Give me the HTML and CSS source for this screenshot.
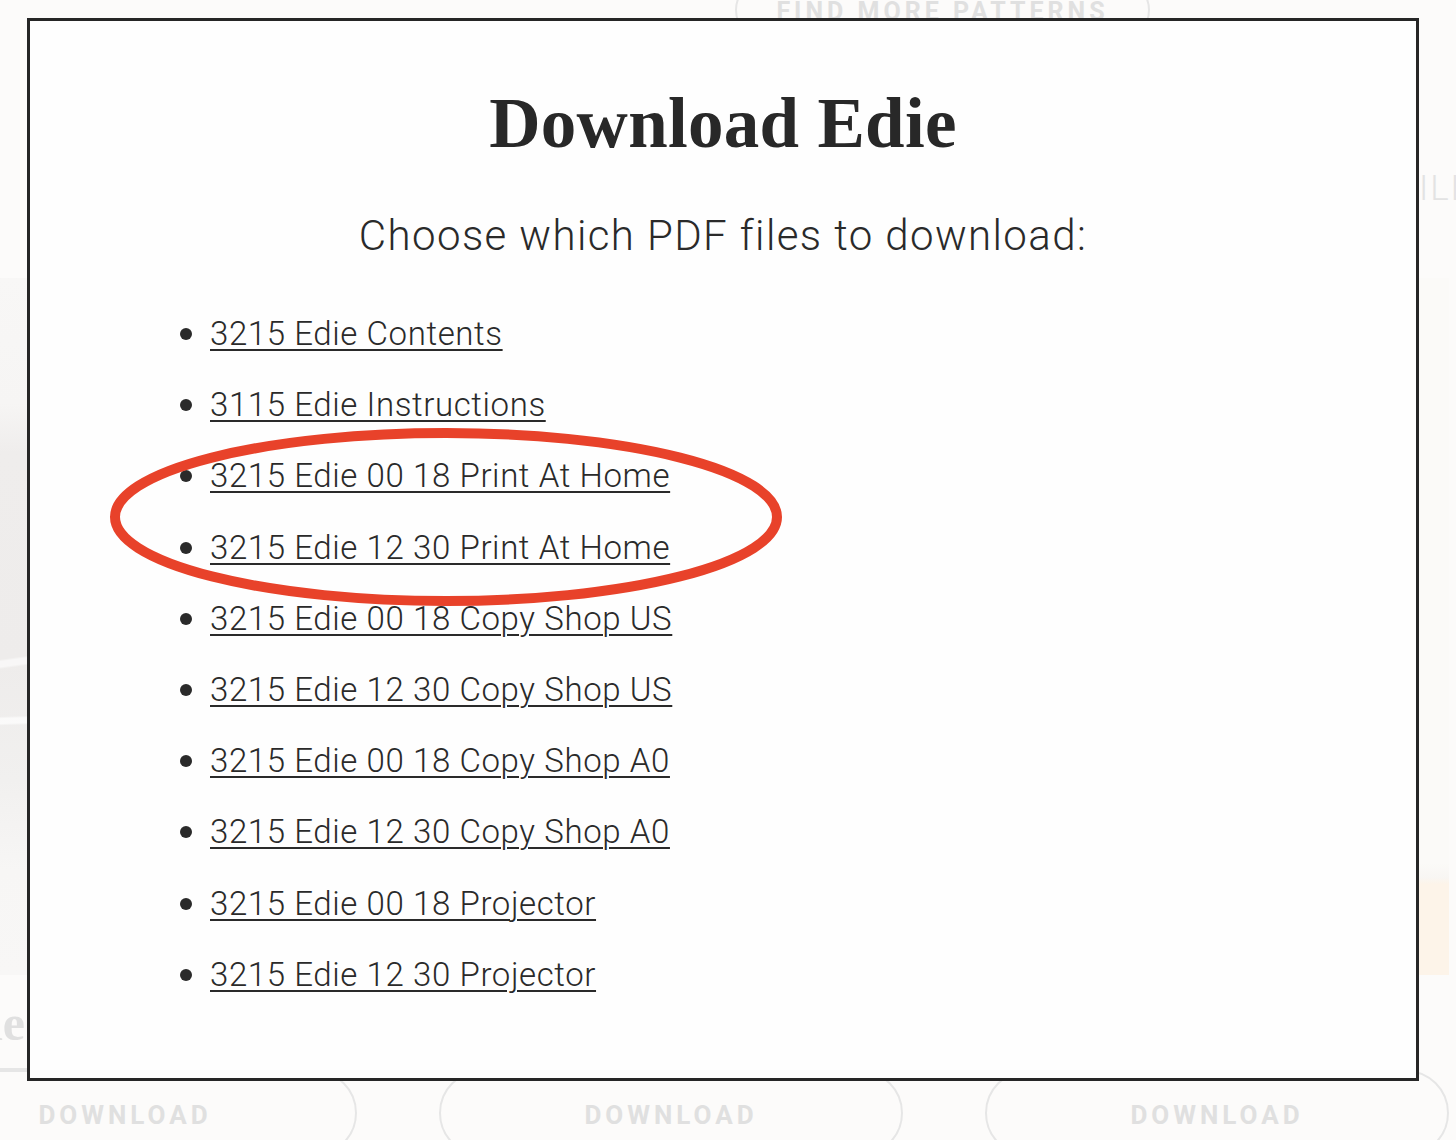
FILE: index.html
```html
<!DOCTYPE html>
<html lang="en">
<head>
<meta charset="utf-8">
<title>Download Edie</title>
<link rel="stylesheet" href="styles.css">
</head>
<body>
<div class="page">
  <div class="topbar">
    <a class="pill pill-top">FIND MORE PATTERNS</a>
  </div>
  <div class="skill-row"><span class="skill">ILL LEVEL</span></div>
  <div class="cards">
    <div class="card-img img-left"></div>
    <div class="card-img img-mid"></div>
    <div class="card-img img-right"></div>
  </div>
  <div class="cards titles">
    <div class="card-title first">Edie</div>
    <div class="card-title"></div>
    <div class="card-title"></div>
  </div>
  <div class="cards buttons">
    <a class="pill pill-dl">DOWNLOAD</a>
    <a class="pill pill-dl">DOWNLOAD</a>
    <a class="pill pill-dl">DOWNLOAD</a>
  </div>

  <div class="modal">
    <h1 class="modal-title">Download Edie</h1>
    <p class="modal-sub">Choose which PDF files to download:</p>
    <ul class="files">
      <li><a href="#">3215 Edie Contents</a></li>
      <li><a href="#">3115 Edie Instructions</a></li>
      <li><a href="#">3215 Edie 00 18 Print At Home</a></li>
      <li><a href="#">3215 Edie 12 30 Print At Home</a></li>
      <li><a href="#">3215 Edie 00 18 Copy Shop US</a></li>
      <li><a href="#">3215 Edie 12 30 Copy Shop US</a></li>
      <li><a href="#">3215 Edie 00 18 Copy Shop A0</a></li>
      <li><a href="#">3215 Edie 12 30 Copy Shop A0</a></li>
      <li><a href="#">3215 Edie 00 18 Projector</a></li>
      <li><a href="#">3215 Edie 12 30 Projector</a></li>
    </ul>
    <svg class="circle" width="700" height="200" viewBox="0 0 700 200" aria-hidden="true">
      <ellipse cx="346" cy="97" rx="331" ry="84" fill="none" stroke="#e8422a" stroke-width="10"/>
    </svg>
  </div>
</div>
</body>
</html>
```
FILE: styles.css
```css
* { box-sizing: border-box; }
html, body { margin: 0; padding: 0; }
body {
  background: #fcfbfa;
  font-family: Roboto, "Liberation Sans", sans-serif;
}
.page {
  position: relative;
  height: 1140px;
  overflow: hidden;
  background: #fcfbfa;
}
.pill {
  display: flex;
  align-items: center;
  justify-content: center;
  font-family: Roboto, "Liberation Sans", sans-serif;
  font-weight: 700;
  font-size: 26px;
  letter-spacing: 4px;
  color: #e0e0e0;
  border: 2px solid #e6e6e6;
  background: #fcfbfa;
  text-decoration: none;
}
.topbar {
  margin-top: -20px;
  padding-left: 735px;
  height: 60px;
}
.pill-top {
  width: 415px;
  height: 60px;
  border-radius: 30px;
  font-size: 25px;
  padding-top: 2px;
}
.skill-row {
  margin-top: 128px;
  padding-left: 1419px;
  height: 60px;
  white-space: nowrap;
  font-size: 35px;
  line-height: 41px;
}
.skill {
  font-weight: 300;
  letter-spacing: 2px;
  color: #e3e3e3;
}
.cards {
  display: grid;
  grid-template-columns: 464px 464px 464px;
  column-gap: 82px;
  margin-left: -107px;
}
.card-img {
  height: 697px;
  margin-top: 50px;
}
.img-left {
  background:
    linear-gradient(172deg, transparent 0 52%, rgba(255,255,255,0.6) 52.3% 53%, transparent 53.3%),
    linear-gradient(178deg, transparent 0 62%, rgba(255,255,255,0.7) 62.3% 63%, transparent 63.3%),
    linear-gradient(180deg, #f8f7f6 0%, #f6f5f4 18%, #efedec 25%, #eeeceb 55%, #f1f0ef 72%, #f7f6f5 85%, #f8f7f6 100%);
}
.img-mid { background: #f6f5f4; }
.img-right {
  background: linear-gradient(180deg, #fbfaf8 0%, #fbfaf8 84%, #f8f6f3 86%, #fdf4e9 87%, #fdf4e9 100%);
}
.titles {
  margin-top: 23px;
}
.card-title {
  height: 72px;
  font-family: "Liberation Serif", serif;
  font-weight: 700;
  font-size: 50px;
  line-height: 50px;
  color: #e0e0e0;
}
.card-title.first {
  text-align: right;
  padding-right: 332px;
  border-bottom: 2px solid #e6e6e6;
}
.pill-dl {
  height: 86px;
  border-radius: 43px;
  padding-top: 3px;
}

.modal {
  position: absolute;
  left: 27px;
  top: 18px;
  width: 1392px;
  height: 1063px;
  background: #fefefe;
  border: 3px solid #262626;
  padding-top: 65px;
  color: #2a2a2a;
}
.modal-title {
  margin: 0;
  text-align: center;
  font-family: "Liberation Serif", serif;
  font-weight: 700;
  font-size: 71px;
  line-height: 74px;
  letter-spacing: 0.3px;
  color: #282828;
}
.modal-sub {
  margin: 52px 0 0;
  text-align: center;
  font-weight: 300;
  font-size: 42px;
  line-height: 48px;
  letter-spacing: 1.4px;
  color: #2a2a2a;
}
.files {
  margin: 37px 0 0 180px;
  padding: 0;
  font-weight: 300;
  font-size: 33px;
  line-height: 71.2px;
  letter-spacing: 0.6px;
}
.files li {
  height: 71.2px;
}
.files li::marker { font-size: 38px; }
.files a {
  color: #2a2a2a;
  text-decoration: underline;
  text-decoration-thickness: 2px;
  text-underline-offset: 4px;
}
.circle {
  position: absolute;
  left: 70px;
  top: 399px;
}
```
